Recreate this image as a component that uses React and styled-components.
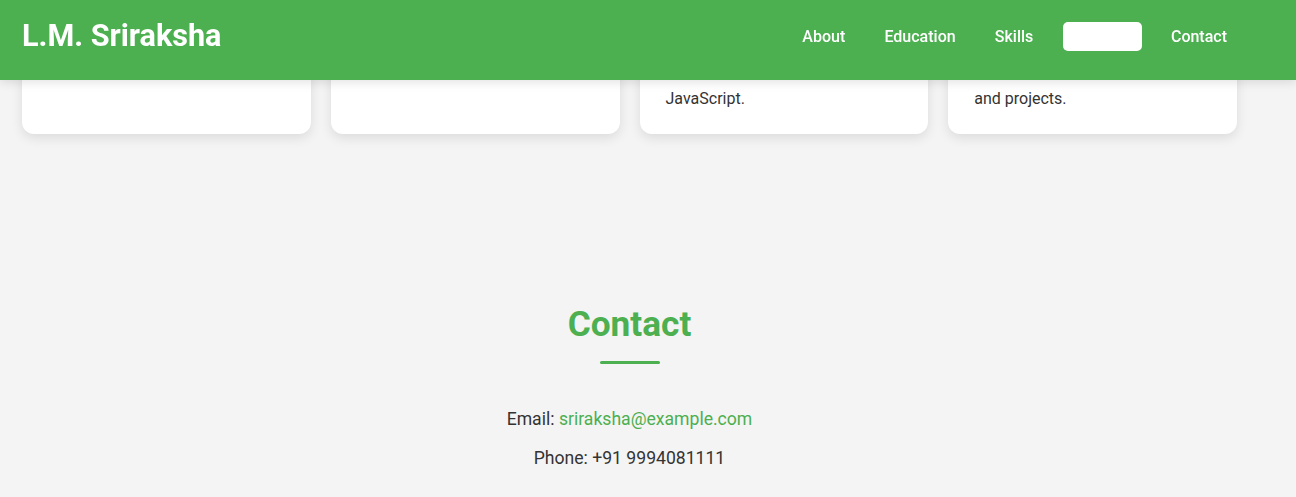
import React from "react";
import styled, { createGlobalStyle } from "styled-components";

const Global = createGlobalStyle`
  * { box-sizing: border-box; }
  html, body { margin: 0; padding: 0; }
  body {
    background: #f4f4f4;
    color: #333;
    font-family: Roboto, "Noto Sans", "Liberation Sans", sans-serif;
    font-size: 16px;
    line-height: 1.6;
  }
`;

const Header = styled.header`
  position: fixed;
  top: 0;
  left: 0;
  right: 0;
  z-index: 10;
  height: 80px;
  padding: 0 59px 7px 22px;
  background: #4caf50;
  box-shadow: 0 2px 10px rgba(0, 0, 0, 0.12);
  display: flex;
  align-items: center;
  justify-content: space-between;
`;

const Logo = styled.h1`
  margin: 0;
  color: #fff;
  font-size: 30.6px;
  font-weight: 700;
  line-height: 1.2;
`;

const Nav = styled.nav`
  display: flex;
  gap: 1.2rem;
`;

const NavLink = styled.a`
  padding: 5px 10px;
  border-radius: 5px;
  color: #fff;
  font-size: 16px;
  font-weight: 500;
  line-height: normal;
  text-decoration: none;
  background: ${(p) => (p.$active ? "#fff" : "transparent")};
`;

const Page = styled.main`
  padding: 0 59px 0 22px;
`;

const CardGrid = styled.section`
  display: grid;
  grid-template-columns: repeat(4, 1fr);
  gap: 20px;
`;

const Card = styled.article`
  background: #fff;
  border-radius: 12px;
  padding: 24px 26px 23px;
  box-shadow: 0 4px 12px rgba(0, 0, 0, 0.1);
`;

const CardTitle = styled.h3`
  margin: 0 0 10px;
  font-size: 1.25rem;
  line-height: 1.3;
  color: #4caf50;
`;

const CardText = styled.p`
  margin: 0;
  font-size: 16px;
  line-height: 1.6;
  color: #333;
`;

const Contact = styled.section`
  padding-top: 169px;
  display: flex;
  flex-direction: column;
  align-items: center;
  text-align: center;
`;

const Heading = styled.h2`
  margin: 0;
  color: #4caf50;
  font-size: 2.2rem;
  font-weight: 700;
  line-height: 1.2;
`;

const Underline = styled.div`
  width: 60px;
  height: 3px;
  margin: 16px 0 41px;
  border-radius: 2px;
  background: #4caf50;
`;

const Line = styled.p`
  margin: 0 0 10px;
  font-size: 1.1rem;
  line-height: 1.6;
  color: #333;
`;

const Link = styled.a`
  color: #4caf50;
  text-decoration: none;
`;

const projects = [
  { title: "Attendance App", text: "Attendance tracker in Flask." },
  { title: "Online Store", text: "Online store built in React." },
  { title: "Portfolio Website", text: "Made in HTML and CSS with JavaScript." },
  { title: "Notes Hub", text: "Site to host all the lecture notes and projects." },
];

export default function App() {
  return (
    <>
      <Global />
      <Header>
        <Logo>L.M. Sriraksha</Logo>
        <Nav>
          <NavLink href="#about">About</NavLink>
          <NavLink href="#education">Education</NavLink>
          <NavLink href="#skills">Skills</NavLink>
          <NavLink href="#projects" $active>Projects</NavLink>
          <NavLink href="#contact">Contact</NavLink>
        </Nav>
      </Header>
      <Page>
        <CardGrid>
          {projects.map((p) => (
            <Card key={p.title}>
              <CardTitle>{p.title}</CardTitle>
              <CardText>{p.text}</CardText>
            </Card>
          ))}
        </CardGrid>
        <Contact id="contact">
          <Heading>Contact</Heading>
          <Underline />
          <Line>
            Email: <Link href="mailto:sriraksha@example.com">sriraksha@example.com</Link>
          </Line>
          <Line>Phone: +91 9994081111</Line>
        </Contact>
      </Page>
    </>
  );
}
